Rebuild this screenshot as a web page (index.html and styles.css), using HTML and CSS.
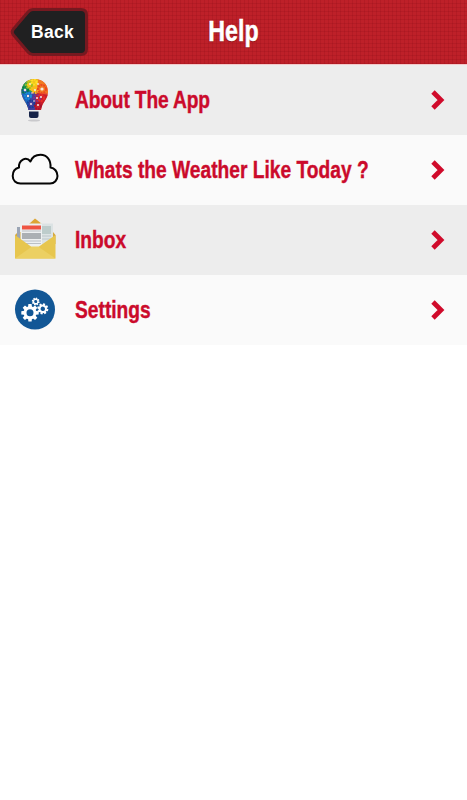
FILE: index.html
```html
<!DOCTYPE html>
<html lang="en">
<head>
    <meta charset="UTF-8">
    <meta name="viewport" content="width=device-width, initial-scale=1.0">
    <title>Help</title>
    <link rel="stylesheet" href="styles.css">
</head>
<body>
    <header class="top-bar">
        <a class="back-button" href="#">
            <svg class="back-shape" viewBox="0 0 80 50">
                <path d="M23 2.500H71Q76.500 2.500 76.500 8V42Q76.500 47.500 71 47.500H23Q20 47.500 18 45L3.500 28Q1 25 3.500 22L18 5Q20 2.500 23 2.500Z" fill="#202021" stroke="#761920" stroke-width="3"/>
            </svg>
            <span class="back-label">Back</span>
        </a>
        <h1>Help</h1>
    </header>

    <nav class="menu">
        <a class="menu-item" href="#">
            <svg class="icon" viewBox="0 0 70 70">
                <defs>
                    <clipPath id="bulb">
                        <path d="M35 15C27 15 21.500 20 21.500 28C21.500 35 27 38 28.500 46H41C42 38 48 35 48 28C48 20 42 15 35 15Z"/>
                    </clipPath>
                </defs>
                <g clip-path="url(#bulb)">
                    <path d="M20 14H50V48H20Z" fill="#e7552b"/>
                    <path d="M20 13H31L34 30L20 31Z" fill="#27a35b"/>
                    <path d="M27 13H39L36 30L27 24Z" fill="#f2c619"/>
                    <path d="M39 13H50V29H36Z" fill="#f17a21"/>
                    <path d="M20 24L31 28L35 47H20Z" fill="#1d65bd"/>
                    <path d="M31 28H37V47H27Z" fill="#46419c"/>
                    <path d="M36 29L49 31L42 47H35Z" fill="#c81e2c"/>
                    <g fill="none" stroke-width="2" stroke-dasharray="2 .8">
                        <circle cx="25" cy="26" r="3" stroke="#08794b"/>
                        <circle cx="29" cy="21" r="3" stroke="#9abc25"/>
                        <circle cx="34" cy="18" r="2.500" stroke="#ffdd28"/>
                        <circle cx="35" cy="26" r="3" stroke="#fbb424"/>
                        <circle cx="42" cy="25" r="4" stroke="#ec4820"/>
                        <circle cx="28" cy="32" r="3" stroke="#168fdb"/>
                        <circle cx="31" cy="40" r="3.500" stroke="#173d99"/>
                        <circle cx="37" cy="34" r="3" stroke="#7d348c"/>
                        <circle cx="41" cy="34" r="3" stroke="#eb2c26"/>
                        <circle cx="38" cy="42" r="3" stroke="#a5112d"/>
                    </g>
                    <g fill="#f6e8df">
                        <circle cx="25" cy="26" r="1.200"/>
                        <circle cx="30" cy="20" r="1"/>
                        <circle cx="35" cy="26" r="1.100"/>
                        <circle cx="42" cy="25" r="1.600"/>
                        <circle cx="28" cy="32" r="1.200"/>
                        <circle cx="31" cy="40" r="1"/>
                        <circle cx="37" cy="34" r="1"/>
                        <circle cx="41" cy="33" r="1"/>
                        <circle cx="38" cy="41" r="1"/>
                        <circle cx="32" cy="29" r=".8"/>
                        <circle cx="38" cy="20" r=".9"/>
                        <circle cx="34" cy="37" r=".8"/>
                    </g>
                </g>
                <path d="M29 47.500H38.500V52Q38.500 54 36.500 54H31Q29 54 29 52Z" fill="#172449"/>
                <ellipse cx="34" cy="56.500" rx="6" ry="1" fill="#c9c9cc"/>
            </svg>
            <span class="label label-tight">About The App</span>
            <svg class="chevron" viewBox="0 0 14 20"><path d="M2 2L10 10L2 18"/></svg>
        </a>

        <a class="menu-item" href="#">
            <svg class="icon" viewBox="0 0 70 70">
                <path d="M20.500 49.500H50C54.500 49.500 57.500 46 57.500 42C57.500 37.500 54.500 34 50.500 33.500C51 26 47 20.800 40.500 20.800C35.500 20.800 32 23.500 30.500 27.500C26 22 18.500 26 19 33.500C15 34.500 12.700 37.500 12.700 42C12.700 46.500 16 49.500 20.500 49.500Z" fill="none" stroke="#050505" stroke-width="2" stroke-linejoin="round"/>
            </svg>
            <span class="label">Whats the Weather Like Today ?</span>
            <svg class="chevron" viewBox="0 0 14 20"><path d="M2 2L10 10L2 18"/></svg>
        </a>

        <a class="menu-item" href="#">
            <svg class="icon" viewBox="0 0 70 70">
                <path d="M29 20L35 14.500L42 20Z" fill="#dda635"/>
                <path d="M15 31L18 28H53L55.500 31V40H15Z" fill="#d6a940"/>
                <path d="M17 23H20V40H17Z" fill="#9ba5b5"/>
                <path d="M40 19.500H53V42H40Z" fill="#dce3e4"/>
                <path d="M42 22H51V30H42Z" fill="#bdcccb"/>
                <path d="M42 32H51M42 35H51" stroke="#bdc6c9" stroke-width="1"/>
                <path d="M20.500 19.500H42V45H20.500Z" fill="#edf0f1"/>
                <path d="M22 21.500H41V25.500H22Z" fill="#ef5543"/>
                <path d="M22 29H41V35H22Z" fill="#abb0b4"/>
                <path d="M22 27H41M22 37H41M24 39.500H41" stroke="#bbc0c5" stroke-width="1"/>
                <path d="M15 31L31 42.500Q35 44.500 39 42.500L55.500 31V54.500H15Z" fill="#e7c64e"/>
                <path d="M15 54.500L32 42.500H38L55.500 54.500Z" fill="#ecd062"/>
            </svg>
            <span class="label">Inbox</span>
            <svg class="chevron" viewBox="0 0 14 20"><path d="M2 2L10 10L2 18"/></svg>
        </a>

        <a class="menu-item" href="#">
            <svg class="icon" viewBox="0 0 70 70">
                <defs>
                    <g id="gear">
                        <circle r="5" fill="none" stroke="#fff" stroke-width="3"/>
                        <g fill="#fff">
                            <path id="teeth" d="M-1.600 -8.700H1.600L2 -5.500H-2ZM-2 5.500H2L1.600 8.700H-1.600Z"/>
                            <use href="#teeth" transform="rotate(45)"/>
                            <use href="#teeth" transform="rotate(90)"/>
                            <use href="#teeth" transform="rotate(135)"/>
                        </g>
                    </g>
                </defs>
                <circle cx="35" cy="35.500" r="20" fill="#125796"/>
                <use href="#gear" transform="translate(30 38.800)"/>
                <use href="#gear" transform="translate(42.800 34.800) rotate(15) scale(.64)"/>
                <use href="#gear" transform="translate(35.700 27.500) rotate(15) scale(.45)"/>
            </svg>
            <span class="label">Settings</span>
            <svg class="chevron" viewBox="0 0 14 20"><path d="M2 2L10 10L2 18"/></svg>
        </a>
    </nav>
</body>
</html>
```
FILE: styles.css
```css
* {
    margin: 0;
    padding: 0;
    box-sizing: border-box;
}

body {
    background: #fff;
    font-family: "Liberation Sans", Arial, sans-serif;
    font-weight: bold;
}

a {
    color: inherit;
    text-decoration: none;
}

/* Header */
.top-bar {
    display: grid;
    grid-template-columns: 90px 1fr 90px;
    height: 65px;
    padding-top: 7px;
    background-color: #be2029;
    background-image:
        repeating-linear-gradient(0deg, rgba(110, 0, 10, 0.13) 0 1px, transparent 1px 4px),
        repeating-linear-gradient(90deg, rgba(110, 0, 10, 0.13) 0 1px, transparent 1px 4px);
    background-clip: padding-box;
    border-bottom: 1px solid #f3c9ca;
}

.back-button {
    display: grid;
    width: 80px;
    height: 50px;
    margin-left: 10px;
    color: #fff;
}

.back-shape,
.back-label {
    grid-area: 1 / 1;
}

.back-shape {
    width: 80px;
    height: 50px;
}

.back-label {
    z-index: 1;
    padding-left: 21px;
    font-size: 17.5px;
    letter-spacing: 0.3px;
    line-height: 51px;
}

h1 {
    color: #fff;
    font-size: 29px;
    line-height: 48px;
    text-align: center;
    transform: scaleX(0.8);
    text-shadow: 0 1px 1px rgba(90, 0, 0, 0.5);
    -webkit-text-stroke: 0.5px #fff;
}

/* Menu rows */
.menu-item {
    display: flex;
    align-items: center;
    height: 70px;
    padding-right: 22px;
    background: #fafafa;
    color: #cb0a2b;
}

.menu-item:nth-child(odd) {
    background: #ededed;
}

.icon {
    flex: none;
    width: 70px;
    height: 70px;
    margin-top: -2px;
}

.label {
    flex: 1;
    min-width: 0;
    margin-left: 5px;
    font-size: 24px;
    line-height: 30px;
    white-space: nowrap;
    transform: scaleX(0.8);
    transform-origin: left;
    -webkit-text-stroke: 0.4px #cb0a2b;
}

.label-tight {
    letter-spacing: -0.2px;
}

.chevron {
    flex: none;
    width: 14px;
    height: 20px;
    margin-top: -1px;
    fill: none;
    stroke: #d00b2b;
    stroke-width: 4.8;
}
```
